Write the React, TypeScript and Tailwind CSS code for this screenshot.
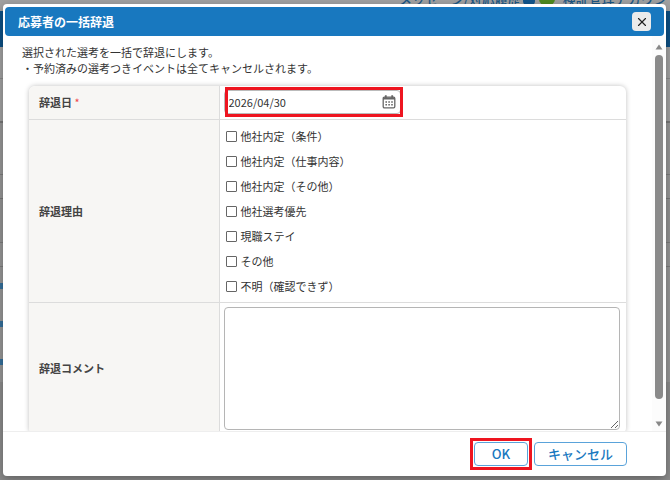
import { X } from "lucide-react";

const reasons = [
  "他社内定（条件）",
  "他社内定（仕事内容）",
  "他社内定（その他）",
  "他社選考優先",
  "現職ステイ",
  "その他",
  "不明（確認できず）",
];

function CalendarIcon() {
  return (
    <svg width="14" height="14" viewBox="0 0 14 14" fill="none" aria-hidden="true">
      <rect x="1.2" y="2.2" width="11.6" height="10.6" rx="1.2" stroke="#666" strokeWidth="1.3" />
      <path d="M1 3.4h12" stroke="#666" strokeWidth="2" />
      <path d="M3.8 0.3v2.7M10.2 0.3v2.7" stroke="#666" strokeWidth="1.8" />
      <path d="M3.4 7h7.4M3.4 9.8h7.4" stroke="#666" strokeWidth="1.5" strokeDasharray="1.6 1.3" />
    </svg>
  );
}

function PageBehind() {
  return (
    <div aria-hidden="true" className="flex h-full flex-col bg-[#8b8b8b]">
      <div className="flex h-[11px] shrink-0 items-end justify-end bg-[#a1a1a1]">
        <div className="flex h-5 w-[271px] shrink-0 items-center whitespace-nowrap pb-1 text-[13px] font-medium text-[#1b5785]">
          <span>メッセージ/対応履歴</span>
          <span className="ml-[2px] h-3 w-3 shrink-0 rounded-sm bg-[#12568c]" />
          <span className="ml-1 mr-2 h-3 w-4 shrink-0 rounded-full bg-[#4f8a20]" />
          <span>検証管理アカウント</span>
        </div>
      </div>
      <div className="h-9 shrink-0 bg-[#0d5084]" />
      <div className="h-8 shrink-0 border-b border-[#8a8a8a] bg-[#a1a1a1]" />
      <div className="h-11 shrink-0 border-b-2 border-[#777] bg-[#a1a1a1]" />
      <div className="h-[52px] shrink-0 border-b border-[#7d7d7d] bg-[#969696]" />
      <div className="h-6 shrink-0 border-b border-[#777] bg-[#969696]" />
      <div className="h-11 shrink-0 border-b border-[#7d7d7d] bg-[#939393]" />
      <div className="h-6 shrink-0 border-b border-[#7d7d7d] bg-[#969696]" />
      <div className="flex h-[115px] shrink-0 flex-col gap-8 bg-[#969696] pt-4">
        <span className="h-[6px] w-2 bg-[#35709c]" />
        <span className="h-[6px] w-2 bg-[#35709c]" />
        <span className="h-[6px] w-2 bg-[#35709c]" />
      </div>
    </div>
  );
}

const th = "w-[190px] border-r border-[#dcdcdc] bg-[#f7f6f4] px-[10px] text-left align-middle font-bold text-[#444]";

export default function App() {
  return (
    <div className="relative h-screen overflow-hidden font-['Noto_Sans_CJK_JP',sans-serif] text-[11px] leading-4 text-[#333]">
      <PageBehind />
      <div className="absolute inset-0 flex pb-1 pl-[3px] pr-1 pt-1">
        <section
          role="dialog"
          aria-labelledby="dialog-title"
          className="flex min-w-0 flex-1 flex-col overflow-hidden rounded bg-white shadow-[0_3px_10px_rgba(0,0,0,0.3)]"
        >
          <header className="mx-[2px] mt-[3px] flex h-[29px] shrink-0 items-center justify-between rounded bg-[#1878bf] pl-[13px] pr-[13px]">
            <h2 id="dialog-title" className="text-xs font-bold text-white">
              応募者の一括辞退
            </h2>
            <button
              type="button"
              aria-label="閉じる"
              className="flex h-[19px] w-[19px] items-center justify-center rounded-sm bg-[#ebebeb] text-[#222]"
            >
              <X size={14} strokeWidth={2} />
            </button>
          </header>

          <div className="flex min-h-0 flex-1">
            <div className="min-w-0 flex-1 overflow-hidden pl-[26px] pr-[26px] pt-2">
              <p className="-ml-[7px]">
                選択された選考を一括で辞退にします。
                <br />
                ・予約済みの選考つきイベントは全てキャンセルされます。
              </p>
              <div className="mt-[10px] overflow-hidden rounded-md bg-white shadow-[0_0_5px_rgba(0,0,0,0.25)]">
                <table className="w-full table-fixed border-collapse">
                  <tbody>
                    <tr className="h-[33px] border-b border-[#dcdcdc]">
                      <th scope="row" className={th}>
                        <label htmlFor="decline-date">
                          辞退日 <span className="font-normal text-[#f04848]">*</span>
                        </label>
                      </th>
                      <td className="px-1 py-0">
                        <div className="relative flex h-6 w-[177px] items-center rounded-sm border border-[#bbb] pr-1">
                          <input
                            id="decline-date"
                            type="text"
                            defaultValue="2026/04/30"
                            className="h-full min-w-0 flex-1 pl-1 outline-none"
                          />
                          <button type="button" aria-label="カレンダー">
                            <CalendarIcon />
                          </button>
                          <span className="pointer-events-none absolute -bottom-1 -right-[3px] -top-1 left-0 border-3 border-[#ee1520]" />
                        </div>
                      </td>
                    </tr>
                    <tr className="border-b border-[#dcdcdc]">
                      <th scope="row" className={th}>
                        辞退理由
                      </th>
                      <td className="px-[6px] pb-[3px] pt-1">
                        <div className="flex flex-col">
                          {reasons.map((reason) => (
                            <label key={reason} className="flex h-[25px] items-center gap-1">
                              <input
                                type="checkbox"
                                className="h-[11px] w-[11px] appearance-none rounded-[1px] border border-[#666] bg-white checked:bg-[#1878bf]"
                              />
                              {reason}
                            </label>
                          ))}
                        </div>
                      </td>
                    </tr>
                    <tr>
                      <th scope="row" className={th}>
                        <label htmlFor="decline-comment">辞退コメント</label>
                      </th>
                      <td className="px-1 py-1 pr-[6px]">
                        <textarea
                          id="decline-comment"
                          className="block h-[123px] w-full resize rounded border border-[#b5b5b5] p-1 outline-none"
                        />
                      </td>
                    </tr>
                  </tbody>
                </table>
              </div>
            </div>
            <div aria-hidden="true" className="flex w-[14px] shrink-0 flex-col items-center bg-[#fcfcfc] pb-1 pt-2">
              <svg width="8" height="6" viewBox="0 0 8 6">
                <path d="M4 0.5 7.5 5.5h-7z" fill="#888" />
              </svg>
              <div className="mb-[22px] mt-[5px] w-2 flex-1 rounded-full bg-[#8a8a8a]" />
              <svg width="8" height="6" viewBox="0 0 8 6">
                <path d="M4 5.5 7.5 0.5h-7z" fill="#888" />
              </svg>
            </div>
          </div>

          <footer className="flex h-[45px] shrink-0 items-center justify-end gap-[6px] border-t border-[#eee] pr-[39px] text-[13px] font-medium text-[#1878bf]">
            <div className="relative">
              <button type="button" className="h-6 w-[54px] rounded border border-[#5aa3da] bg-white">
                OK
              </button>
              <span className="pointer-events-none absolute -inset-1 border-3 border-[#ee1520]" />
            </div>
            <button type="button" className="h-6 w-[93px] rounded border border-[#5aa3da] bg-white">
              キャンセル
            </button>
          </footer>
        </section>
      </div>
    </div>
  );
}
